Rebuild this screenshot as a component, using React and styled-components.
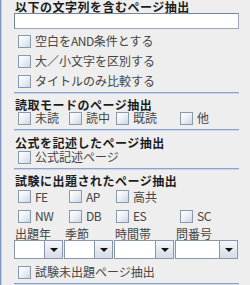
import React from 'react';
import styled, { createGlobalStyle } from 'styled-components';

const GlobalStyle = createGlobalStyle`
  html, body {
    margin: 0;
    padding: 0;
    background: #eeeeee;
  }
  body {
    font-family: "Noto Sans CJK JP", "Noto Sans", sans-serif;
  }
`;

const Panel = styled.div`
  width: 250px;
  height: 285px;
  box-sizing: border-box;
  overflow: hidden;
  background: #eeeeee;
  border-left: 1px solid #7f97bf;
  box-shadow: inset 1px 0 0 #c3cfe3;
  padding: 0 11px 0 13px;
  display: flex;
  flex-direction: column;
`;

const Title = styled.div`
  height: 13px;
  line-height: 13px;
  margin-top: ${p => p.$top || 0}px;
  padding-left: 1px;
  font-size: 12px;
  font-weight: 700;
  letter-spacing: 0.5px;
  color: #1c1c1c;
  white-space: nowrap;
`;

const TextField = styled.div`
  height: 16px;
  box-sizing: border-box;
  background: #ffffff;
  border: 1px solid #9aa8b8;
  border-top-color: #74859a;
  border-left-color: #74859a;
`;

const Stack = styled.div`
  margin-top: ${p => p.$top || 0}px;
  display: flex;
  flex-direction: column;
`;

const Row = styled.div`
  height: ${p => p.$h || 20}px;
  margin-top: ${p => p.$top || 0}px;
  padding-left: 4px;
  display: flex;
  align-items: center;
`;

const GridRow = styled.div`
  height: ${p => p.$h || 20}px;
  margin-top: ${p => p.$top || 0}px;
  padding-left: 4px;
  display: grid;
  grid-template-columns: 51px 47px 64px 1fr;
  align-items: center;
`;

const Option = styled.label`
  display: flex;
  align-items: center;
  white-space: nowrap;
`;

const Box = styled.span`
  width: 13px;
  height: 13px;
  box-sizing: border-box;
  flex: none;
  border: 1px solid #8a99ad;
  background: linear-gradient(135deg, #ffffff 0%, #eef2f6 45%, #cdd6e2 100%);
`;

const OptionText = styled.span`
  margin-left: 4px;
  font-size: 12px;
  line-height: 14px;
  color: #454545;
`;

const Latin = styled.span`
  letter-spacing: -0.5px;
`;

const Separator = styled.div`
  margin-top: ${p => p.$top || 0}px;
  height: 0;
  flex: none;
  border-top: 1px solid #8ba3cf;
  border-bottom: 1px solid #cbd6ea;
`;

const ComboGrid = styled.div`
  margin-top: ${p => p.$top || 0}px;
  display: grid;
  grid-template-columns: 50px 50px 61px 64px;
`;

const ComboColumn = styled.div`
  display: flex;
  flex-direction: column;
`;

const ComboLabel = styled.div`
  height: 12px;
  line-height: 12px;
  padding-left: 1px;
  font-size: 12px;
  color: #454545;
  white-space: nowrap;
`;

const Combo = styled.div`
  height: 19px;
  margin-right: 1px;
  box-sizing: border-box;
  display: flex;
  background: #ffffff;
  border: 1px solid #8796a8;
`;

const ComboField = styled.div`
  flex: 1;
`;

const ComboArrow = styled.div`
  width: 17px;
  border-left: 1px solid #8796a8;
  background: linear-gradient(#f5f7fa, #d5dce6);
  display: flex;
  align-items: center;
  justify-content: center;

  &::after {
    content: '';
    border-left: 4px solid transparent;
    border-right: 4px solid transparent;
    border-top: 4px solid #111111;
  }
`;

const Check = ({ children }) => (
  <Option>
    <Box />
    <OptionText>{children}</OptionText>
  </Option>
);

const comboLabels = ['出題年', '季節', '時間帯', '問番号'];

const App = () => (
  <>
    <GlobalStyle />
    <Panel>
      <Title>以下の文字列を含むページ抽出</Title>
      <TextField />
      <Stack $top={2}>
        <Row><Check>空白を<Latin>AND</Latin>条件とする</Check></Row>
        <Row><Check>大／小文字を区別する</Check></Row>
        <Row><Check>タイトルのみ比較する</Check></Row>
      </Stack>
      <Separator $top={1} />

      <Title $top={4}>読取モードのページ抽出</Title>
      <GridRow $h={14}>
        <Check>未読</Check>
        <Check>読中</Check>
        <Check>既読</Check>
        <Check>他</Check>
      </GridRow>
      <Separator $top={4} />

      <Title $top={5}>公式を記述したページ抽出</Title>
      <Row $h={14} $top={1}><Check>公式記述ページ</Check></Row>
      <Separator $top={4} />

      <Title $top={4}>試験に出題されたページ抽出</Title>
      <GridRow $h={19}>
        <Check><Latin>FE</Latin></Check>
        <Check><Latin>AP</Latin></Check>
        <Check>高共</Check>
      </GridRow>
      <GridRow $h={20}>
        <Check><Latin>NW</Latin></Check>
        <Check><Latin>DB</Latin></Check>
        <Check><Latin>ES</Latin></Check>
        <Check><Latin>SC</Latin></Check>
      </GridRow>
      <ComboGrid $top={2}>
        {comboLabels.map(label => (
          <ComboColumn key={label}>
            <ComboLabel>{label}</ComboLabel>
            <Combo>
              <ComboField />
              <ComboArrow />
            </Combo>
          </ComboColumn>
        ))}
      </ComboGrid>
      <Row $h={14} $top={6}><Check>試験未出題ページ抽出</Check></Row>
      <Separator $top={4} />
    </Panel>
  </>
);

export default App;
